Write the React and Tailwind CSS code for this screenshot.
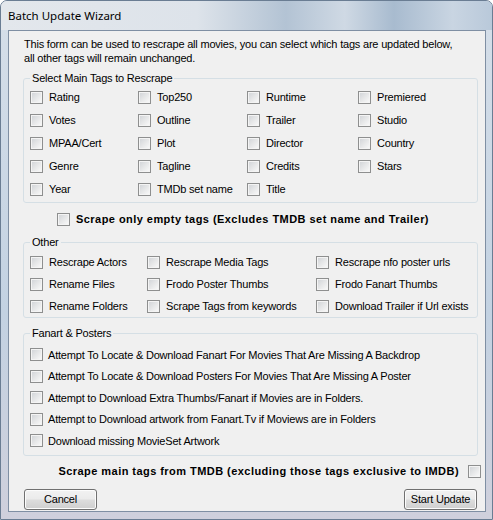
import React from 'react';

const mainTags = [
  ['Rating', 'Top250', 'Runtime', 'Premiered'],
  ['Votes', 'Outline', 'Trailer', 'Studio'],
  ['MPAA/Cert', 'Plot', 'Director', 'Country'],
  ['Genre', 'Tagline', 'Credits', 'Stars'],
  ['Year', 'TMDb set name', 'Title', null],
];

const otherTags = [
  ['Rescrape Actors', 'Rescrape Media Tags', 'Rescrape nfo poster urls'],
  ['Rename Files', 'Frodo Poster Thumbs', 'Frodo Fanart Thumbs'],
  ['Rename Folders', 'Scrape Tags from keywords', 'Download Trailer if Url exists'],
];

const fanartTags = [
  'Attempt To Locate & Download Fanart For Movies That Are Missing A Backdrop',
  'Attempt To Locate & Download Posters For Movies That Are Missing A Poster',
  'Attempt to Download Extra Thumbs/Fanart if Movies are in Folders.',
  'Attempt to Download artwork from Fanart.Tv if Moviews are in Folders',
  'Download missing MovieSet Artwork',
];

// win7 style unchecked box
function Box() {
  return (
    <span className="inline-block w-[13px] h-[13px] shrink-0 border border-[#8e8f8f] bg-[linear-gradient(135deg,#cfd2d6_0%,#e6e7e8_50%,#fbfbfb_100%)] shadow-[inset_0_0_0_1px_#f4f4f4]" />
  );
}

function Check({ label, gap = 'gap-[6px]' }) {
  return (
    <div className={`flex items-center ${gap} h-full`}>
      <Box />
      <span className="whitespace-nowrap">{label}</span>
    </div>
  );
}

function Group({ title, className = '', children }) {
  return (
    <fieldset className={`border border-[#d5dfe5] rounded-[3px] px-[6px] ${className}`}>
      <legend className="px-[2px] leading-[14px]">{title}</legend>
      {children}
    </fieldset>
  );
}

function WinButton({ children }) {
  return (
    <button className="w-[73px] h-[21px] rounded-[3px] border border-[#707070] bg-[linear-gradient(180deg,#f2f2f2_0%,#ebebeb_48%,#dddddd_52%,#cfcfcf_100%)] shadow-[inset_0_0_0_1px_#fcfcfc] text-[11px] leading-none text-black">
      {children}
    </button>
  );
}

export default function App() {
  return (
    <div className="w-[493px] h-[520px] flex flex-col border border-[#6a7d93] rounded-t-[7px] overflow-hidden bg-[linear-gradient(180deg,#d6dfe9_0%,#c3d2e2_60%,#cfd0dc_100%)] font-['Liberation_Sans',Arial,sans-serif] text-[11px] tracking-[-0.2px] text-black">
      {/* title bar */}
      <div className="h-[29px] shrink-0 flex items-center pl-[7px] bg-[linear-gradient(90deg,#e3e7ec_0%,#dde3ea_40%,#b3c3d4_58%,#cfd9e4_70%,#a8bbcf_80%,#c9d5e2_92%,#b9c9da_100%)]">
        <span className="font-['Noto_Sans',sans-serif] text-[11.5px] tracking-normal leading-none">Batch Update Wizard</span>
      </div>

      {/* client area */}
      <div className="flex-1 ml-[7px] mr-[6px] mb-[7px] border border-[#7f8fa3] bg-[#f0f0f0] flex flex-col pt-[6px] pl-[14px] pr-[7px]">
        <p className="leading-[14px] pl-[1px]">
          This form can be used to rescrape all movies, you can select which tags are updated below,
          <br />
          all other tags will remain unchanged.
        </p>

        <Group title="Select Main Tags to Rescrape" className="mt-[6px] pb-[1px]">
          <div className="grid grid-cols-[108px_109px_111px_1fr] auto-rows-[23px] pt-[1px]">
            {mainTags.flat().map((t, i) => (
              <div key={i}>{t && <Check label={t} />}</div>
            ))}
          </div>
        </Group>

        <div className="h-[32px] flex items-center pl-[34px] gap-[6px] font-bold tracking-[0.45px]">
          <Box />
          <span>Scrape only empty tags (Excludes TMDB set name and Trailer)</span>
        </div>

        <Group title="Other">
          <div className="grid grid-cols-[117px_169px_1fr] auto-rows-[22px] pt-[2px]">
            {otherTags.flat().map((t, i) => (
              <div key={i}>
                <Check label={t} />
              </div>
            ))}
          </div>
        </Group>

        <Group title="Fanart & Posters" className="mt-[8px] pb-[3px]">
          <div className="flex flex-col pt-[4px]">
            {fanartTags.map((t, i) => (
              <div key={i} className="h-[21.5px]">
                <Check label={t} gap="gap-[5px]" />
              </div>
            ))}
          </div>
        </Group>

        <div className="h-[32px] flex items-center justify-end gap-[9px] font-bold tracking-[0.45px] -mr-[3px]">
          <span>Scrape main tags from TMDB (excluding those tags exclusive to IMDB)</span>
          <Box />
        </div>

        <div className="flex justify-between mt-[1px] pl-[1px] pr-[1px]">
          <WinButton>Cancel</WinButton>
          <WinButton>Start Update</WinButton>
        </div>
      </div>
    </div>
  );
}
